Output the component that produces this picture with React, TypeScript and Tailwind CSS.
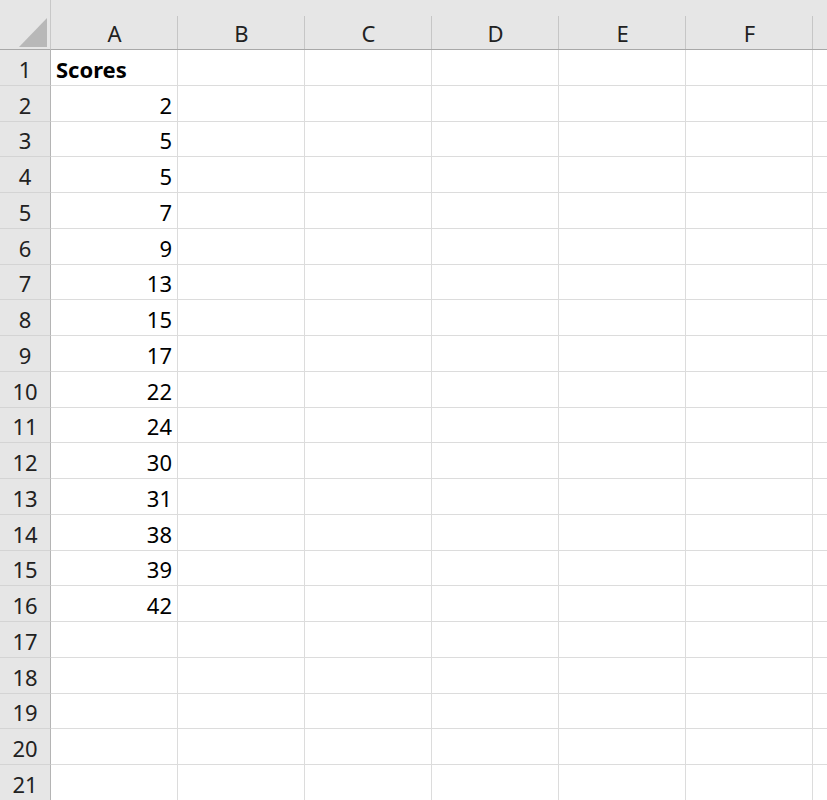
import React from "react";

const cols = ["A", "B", "C", "D", "E", "F"];
const values: (string | number)[] = ["Scores", 2, 5, 5, 7, 9, 13, 15, 17, 22, 24, 30, 31, 38, 39, 42, "", "", "", "", ""];

export default function App() {
  return (
    <div
      className="w-[827px] h-[800px] overflow-hidden bg-white text-black"
      style={{ fontFamily: '"Noto Sans", "Open Sans", sans-serif' }}
    >
      <div className="grid grid-cols-[51px_127px_127px_127px_127px_127px_127px_1fr] grid-rows-[50px_repeat(21,35.75px)]">
        {/* corner */}
        <div className="relative bg-[#e6e6e6] border-r border-b border-r-[#c8c8c8] border-b-[#a8a8a8]">
          <div className="absolute right-[3px] bottom-[2px] w-0 h-0 border-l-[28px] border-l-transparent border-b-[29px] border-b-[#b8b8b8]" />
        </div>
        {cols.map((c) => (
          <div key={c} className="relative bg-[#e6e6e6] border-b border-b-[#a8a8a8] flex items-end justify-center pb-[3px]">
            <span className="text-[22px] leading-none pb-[2px] text-[#222]">{c}</span>
            <div className="absolute right-0 top-[16px] bottom-0 w-px bg-[#c6c6c6]" />
          </div>
        ))}
        <div className="bg-[#e6e6e6] border-b border-b-[#a8a8a8]" />

        {values.map((v, i) => (
          <React.Fragment key={i}>
            <div className="bg-[#e6e6e6] border-r border-b border-r-[#b4b4b4] border-b-[#d4d4d4] flex items-end justify-center pb-[5px]">
              <span className="text-[22px] leading-none text-[#222]">{i + 1}</span>
            </div>
            <div
              className={`border-r border-b border-[#dcdcdc] flex items-end pb-[5px] ${
                i === 0 ? "justify-start pl-[5px]" : "justify-end pr-[5px]"
              }`}
            >
              <span className={`text-[22px] leading-none ${i === 0 ? "font-bold" : ""}`}>{v}</span>
            </div>
            {[0, 1, 2, 3, 4].map((k) => (
              <div key={k} className="border-r border-b border-[#dcdcdc]" />
            ))}
            <div className="border-b border-[#dcdcdc]" />
          </React.Fragment>
        ))}
      </div>
    </div>
  );
}
